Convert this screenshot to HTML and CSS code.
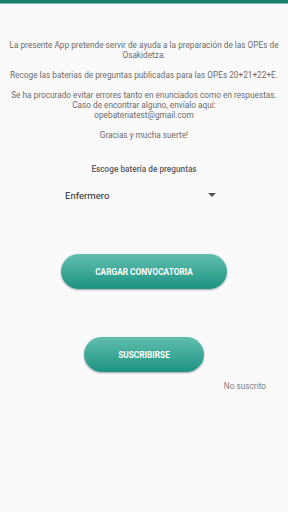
FILE: index.html
```html
<!DOCTYPE html>
<html lang="es">
<head>
<meta charset="utf-8">
<link rel="stylesheet" href="styles.css">
</head>
<body>
<div class="topbar"></div>
<main class="content">
  <div class="intro">
    <p>La presente App pretende servir de ayuda a la preparación de las OPEs de Osakidetza.</p>
    <p>Recoge las baterias de preguntas publicadas para las OPEs 20+21+22+E.</p>
    <p>Se ha procurado evitar errores tanto en enunciados como en respuestas.<br>Caso de encontrar alguno, envíalo aquí:<br>opebateriatest@gmail.com</p>
    <p>Gracias y mucha suerte!</p>
  </div>
  <div class="label">Escoge batería de preguntas</div>
  <div class="select">
    <span class="select-value">Enfermero</span>
    <span class="select-arrow"></span>
  </div>
  <div class="btn-row">
    <button class="btn btn-wide">CARGAR CONVOCATORIA</button>
  </div>
  <div class="btn-row btn-row-2">
    <button class="btn btn-narrow">SUSCRIBIRSE</button>
  </div>
  <div class="status">No suscrito</div>
</main>
</body>
</html>
```
FILE: styles.css
```css
html, body {
  margin: 0;
  padding: 0;
  background: #fafafa;
  font-family: Roboto, "Liberation Sans", sans-serif;
}
.topbar {
  height: 3px;
  background: #16806f;
  border-bottom: 1px solid #7fb9ae;
}
.content {
  display: flex;
  flex-direction: column;
}
.intro {
  padding: 36px 4px 0;
  text-align: center;
  font-size: 8.25px;
  line-height: 10px;
  color: #6a6a6a;
}
.intro p {
  margin: 0 0 10px;
}
.label {
  margin-top: 14px;
  text-align: center;
  font-size: 8.25px;
  font-weight: 500;
  color: #5a5a5a;
  line-height: 10px;
}
.select {
  display: flex;
  align-items: center;
  justify-content: space-between;
  margin: 14px 72px 0 65px;
  height: 14px;
}
.select-value {
  font-size: 9.6px;
  color: #262626;
}
.select-arrow {
  width: 0;
  height: 0;
  border-left: 4px solid transparent;
  border-right: 4px solid transparent;
  border-top: 4px solid #555;
}
.btn-row {
  display: flex;
  justify-content: center;
  margin-top: 52px;
}
.btn-row-2 {
  margin-top: 48px;
}
.btn {
  height: 35px;
  border: none;
  border-radius: 18px;
  background: linear-gradient(#62bfae, #1c9282);
  box-shadow: 0 1px 2px rgba(0,0,0,0.35);
  color: #fff;
  font-family: Roboto, "Liberation Sans", sans-serif;
  font-weight: 700;
  font-size: 8.3px;
  padding: 0;
}
.btn-wide {
  width: 166px;
}
.btn-narrow {
  width: 120px;
}
.status {
  margin-top: 9px;
  padding-right: 22px;
  text-align: right;
  font-size: 8.25px;
  color: #7a7a7a;
}
```
